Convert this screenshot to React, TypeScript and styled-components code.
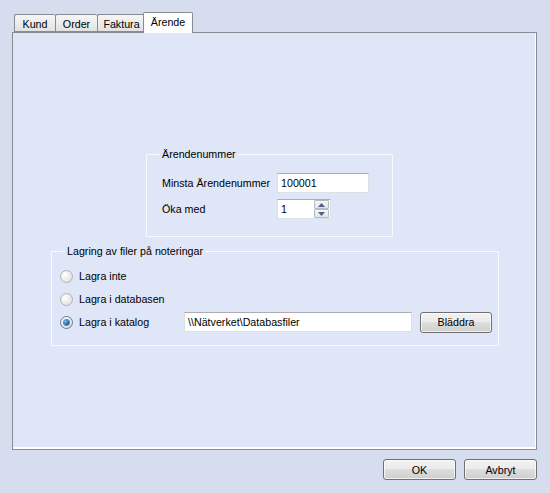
import React from "react";
import styled, { createGlobalStyle } from "styled-components";

const Global = createGlobalStyle`
  html, body { margin: 0; padding: 0; }
  body {
    background: #d5ddef;
    font-family: "Liberation Sans", Arial, sans-serif;
    font-size: 10.7px;
    color: #000;
  }
  * { box-sizing: border-box; }
`;

const Window = styled.div`
  width: 550px;
  height: 493px;
  padding: 12px 13px 0 12px;
  background: #d5ddef;
  display: flex;
  flex-direction: column;
`;

const TabStrip = styled.div`
  height: 20px;
  display: flex;
  align-items: flex-end;
  padding-left: 2px;
`;

const Tab = styled.div<{ $active?: boolean; $w: number }>`
  position: relative;
  width: ${(p) => p.$w}px;
  height: ${(p) => (p.$active ? "21px" : "18px")};
  margin-bottom: ${(p) => (p.$active ? "-1px" : "0")};
  margin-left: ${(p) => (p.$active ? "-2px" : "0")};
  padding-top: 2px;
  border: 1px solid #898c95;
  border-bottom: ${(p) => (p.$active ? "none" : "1px solid #898c95")};
  border-right-width: ${(p) => (p.$active ? "1px" : "0")};
  border-radius: 2px 2px 0 0;
  background: ${(p) =>
    p.$active ? "#ffffff" : "linear-gradient(#f6f6f6, #ececec 50%, #e2e2e2)"};
  z-index: ${(p) => (p.$active ? 2 : 1)};
  line-height: 14px;
  text-align: center;
  white-space: nowrap;
`;

const Panel = styled.div`
  width: 525px;
  height: 418px;
  border: 1px solid #898c95;
  background: #dfe6f7;
  box-shadow: inset -1px -2px 0 #ffffff;
  padding: 115px 0 0 0;
  display: flex;
  flex-direction: column;
`;

const Group = styled.fieldset<{ $left: number; $width: number; $pt: number; $pb: number; $mt?: number }>`
  margin: ${(p) => p.$mt ?? 0}px 0 0 ${(p) => p.$left}px;
  width: ${(p) => p.$width}px;
  padding: ${(p) => p.$pt}px 0 ${(p) => p.$pb}px 0;
  border: 1px solid #f7f9fd;
  min-width: 0;
  display: flex;
  flex-direction: column;
`;

const Legend = styled.legend`
  margin-left: 13px;
  padding: 0 2px;
  line-height: 13px;
  font-size: 10.7px;
`;

const FormRow = styled.div`
  display: flex;
  align-items: center;
  height: 20px;
  padding-left: 15px;
  & + & { margin-top: 6px; }
`;

const Label = styled.span<{ $w: number }>`
  width: ${(p) => p.$w}px;
  flex-shrink: 0;
`;

const TextBox = styled.div<{ $w: number; $h?: number }>`
  width: ${(p) => p.$w}px;
  height: ${(p) => p.$h ?? 20}px;
  background: #ffffff;
  border: 1px solid #dbdfe6;
  border-top-color: #abadb3;
  padding: 0 3px;
  display: flex;
  align-items: center;
  line-height: 14px;
  white-space: nowrap;
  overflow: hidden;
`;

const SpinBox = styled(TextBox)`
  padding-right: 0;
  justify-content: space-between;
`;

const SpinButtons = styled.div`
  width: 15px;
  height: 18px;
  display: flex;
  flex-direction: column;
  margin-right: 1px;
`;

const SpinButton = styled.div`
  flex: 1;
  border: 1px solid #b6bcc6;
  border-radius: 1px;
  background: linear-gradient(#f6f7f9, #dfe3ea);
  display: flex;
  align-items: center;
  justify-content: center;
`;

const RadioRow = styled.div`
  display: flex;
  align-items: center;
  height: 20px;
  padding-left: 8px;
  & + & { margin-top: 3px; }
`;

const RadioLabelCell = styled.label`
  width: 124px;
  flex-shrink: 0;
  display: flex;
  align-items: center;
  gap: 6px;
`;

const RadioCircle = styled.span<{ $checked?: boolean }>`
  width: 13px;
  height: 13px;
  border-radius: 50%;
  border: 1px solid ${(p) => (p.$checked ? "#5a7fa3" : "#b3b3b3")};
  background: radial-gradient(circle at 35% 35%, #ffffff 0%, #eeeeee 45%, #d6d6d6 100%);
  display: flex;
  align-items: center;
  justify-content: center;
  &::after {
    content: "";
    display: ${(p) => (p.$checked ? "block" : "none")};
    width: 5px;
    height: 5px;
    border-radius: 50%;
    background: radial-gradient(circle at 35% 35%, #7cc4ee 0%, #1d5d96 60%, #0d3b6a 100%);
    box-shadow: 0 0 0 1px #4b8bc0;
  }
`;

const Button = styled.div<{ $w: number; $ml?: number }>`
  width: ${(p) => p.$w}px;
  height: 21px;
  margin-left: ${(p) => p.$ml ?? 0}px;
  border: 1px solid #707070;
  border-radius: 3px;
  background: linear-gradient(#f2f2f2, #ebebeb 49%, #dddddd 50%, #cfcfcf);
  box-shadow: inset 0 0 0 1px rgba(255, 255, 255, 0.7);
  display: flex;
  align-items: center;
  justify-content: center;
  line-height: 14px;
`;

const Footer = styled.div`
  display: flex;
  justify-content: flex-end;
  gap: 8px;
  margin-top: 9px;
`;

const Arrow = ({ up }: { up?: boolean }) => (
  <svg width="7" height="4" viewBox="0 0 7 4">
    <polygon points={up ? "0,4 7,4 3.5,0" : "0,0 7,0 3.5,4"} fill="#4d6185" />
  </svg>
);

export default function App() {
  return (
    <>
      <Global />
      <Window>
        <TabStrip>
          <Tab $w={41}>Kund</Tab>
          <Tab $w={42}>Order</Tab>
          <Tab $w={48}>Faktura</Tab>
          <Tab $w={50} $active>
            Ärende
          </Tab>
        </TabStrip>
        <Panel>
          <Group $left={133} $width={247} $pt={12} $pb={17}>
            <Legend>Ärendenummer</Legend>
            <FormRow>
              <Label $w={115}>Minsta Ärendenummer</Label>
              <TextBox $w={92}>100001</TextBox>
            </FormRow>
            <FormRow>
              <Label $w={115}>Öka med</Label>
              <SpinBox $w={54}>
                <span>1</span>
                <SpinButtons>
                  <SpinButton>
                    <Arrow up />
                  </SpinButton>
                  <SpinButton>
                    <Arrow />
                  </SpinButton>
                </SpinButtons>
              </SpinBox>
            </FormRow>
          </Group>
          <Group $left={38} $width={448} $pt={8} $pb={13} $mt={8}>
            <Legend>Lagring av filer på noteringar</Legend>
            <RadioRow>
              <RadioLabelCell>
                <RadioCircle />
                Lagra inte
              </RadioLabelCell>
            </RadioRow>
            <RadioRow>
              <RadioLabelCell>
                <RadioCircle />
                Lagra i databasen
              </RadioLabelCell>
            </RadioRow>
            <RadioRow>
              <RadioLabelCell>
                <RadioCircle $checked />
                Lagra i katalog
              </RadioLabelCell>
              <TextBox $w={228}>\\Nätverket\Databasfiler</TextBox>
              <Button $w={72} $ml={8}>
                Bläddra
              </Button>
            </RadioRow>
          </Group>
        </Panel>
        <Footer>
          <Button $w={73}>OK</Button>
          <Button $w={73}>Avbryt</Button>
        </Footer>
      </Window>
    </>
  );
}
